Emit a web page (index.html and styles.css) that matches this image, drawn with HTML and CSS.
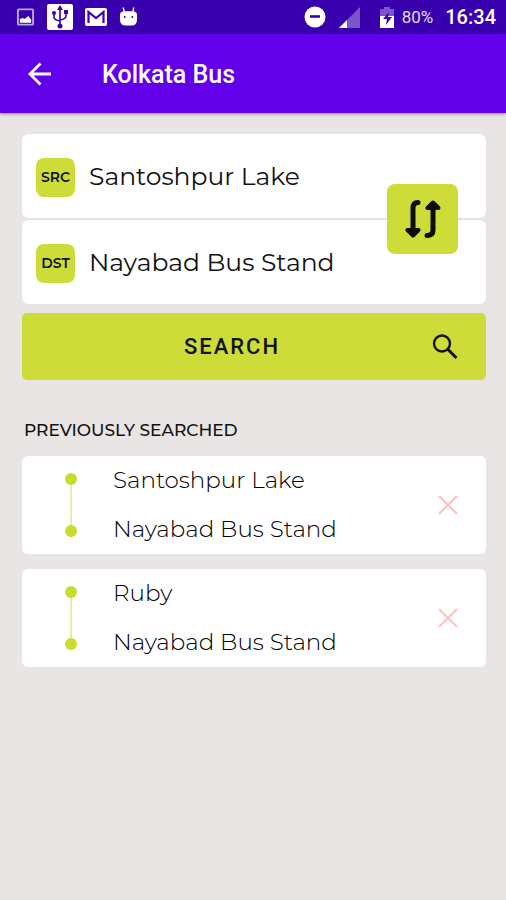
FILE: index.html
```html
<!DOCTYPE html>
<html lang="en">
<head>
<meta charset="utf-8">
<meta name="viewport" content="width=device-width, initial-scale=1">
<title>Kolkata Bus</title>
<link rel="stylesheet" href="styles.css">
</head>
<body>
<div class="status-bar">
  <div class="status-group notifications">
    <svg class="icon-small" viewBox="0 0 20 20" aria-hidden="true"><rect x="2" y="2" width="16" height="16" rx="1" fill="none" stroke="#b9a8ee" stroke-width="2"/><path d="M4 16v-4l3-1 2 1 4-3 3 4v3z" fill="#fff"/></svg>
    <svg class="icon-usb" viewBox="0 0 26 26" aria-hidden="true"><rect width="26" height="26" rx="2" fill="#fff"/><g fill="none" stroke="#3a00ad" stroke-width="1.600"><path d="M13 4v18M7 9v4q0 3 6 4M19 8v4q0 3-6 4"/></g><path d="M13 1l3 5h-6zM17 6h4v4h-4z" fill="#3a00ad"/><circle cx="7" cy="9" r="2" fill="#3a00ad"/><circle cx="13" cy="22" r="2.500" fill="#3a00ad"/></svg>
    <svg class="icon-mail" viewBox="0 0 22 18" aria-hidden="true"><rect width="22" height="18" rx="2" fill="#fff"/><path d="M3.500 15V4L11 10l7.500-6v11" fill="none" stroke="#3a00ad" stroke-width="2.200"/></svg>
    <svg class="icon-small" viewBox="0 0 20 20" aria-hidden="true"><path d="M4.500 0l1 5M15.500 0l-1 5" stroke="#fff" stroke-width="1.4"/><path d="M1 8q0-4 5-4h8q5 0 5 4v4q0 7-6 7H7q-6 0-6-7z" fill="#fff"/><circle cx="6" cy="10" r="1" fill="#3a00ad"/><circle cx="14" cy="10" r="1" fill="#3a00ad"/></svg>
  </div>
  <div class="status-group">
    <svg class="icon-dnd" viewBox="0 0 22 22" aria-hidden="true"><circle cx="11" cy="11" r="10.5" fill="#fff"/><path d="M6 10.5h10" stroke="#3a00ad" stroke-width="2.6"/></svg>
    <svg class="icon-signal" viewBox="0 0 22 22" aria-hidden="true"><path d="M22 1v21H1z" fill="#7a55cc"/><path d="M9 14v8H1z" fill="#fff"/></svg>
    <svg class="icon-battery" viewBox="0 0 14 22" aria-hidden="true"><path d="M4 1h6v2h4v19H0V3h4z" fill="#7a55cc"/><path d="M0 10h14v12H0z" fill="#fff"/><path d="M9 6l-6 7h4l-1 6 6-8H8z" fill="#3a00ad"/></svg>
    <span class="battery-level">80%</span>
    <span class="clock">16:34</span>
  </div>
</div>
<header class="app-bar">
  <button class="back" type="button" aria-label="Back"><svg viewBox="0 0 24 24"><path d="M23 12H2M12.500 1.500L2 12l10.500 10.500" fill="none" stroke="#fff" stroke-width="2.800"/></svg></button>
  <h1 class="app-title">Kolkata Bus</h1>
</header>
<main class="content">
  <form class="search-form">
    <div class="fields">
      <div class="field">
        <label class="tag" for="source">SRC</label>
        <input class="place" id="source" type="text" value="Santoshpur Lake">
      </div>
      <div class="field">
        <label class="tag" for="destination">DST</label>
        <input class="place" id="destination" type="text" value="Nayabad Bus Stand">
      </div>
      <button class="swap" type="button" aria-label="Swap source and destination">
        <svg viewBox="0 0 36 40"><g fill="none" stroke="#0b0c02" stroke-width="5" stroke-linecap="round" stroke-linejoin="round"><path d="M13 3.500Q8 3.500 8 9v23M22 36.500Q28 36.500 28 31V8"/></g><g fill="#0b0c02" stroke="#0b0c02" stroke-width="4" stroke-linejoin="round"><path d="M2.500 31h11L8 36.500zM22.500 9h11L28 3.500z"/></g></svg>
      </button>
    </div>
    <button class="search" type="submit">
      <span class="search-text">SEARCH</span>
      <svg viewBox="0 0 26 26" aria-hidden="true"><circle cx="10" cy="9.500" r="8" fill="none" stroke="#111400" stroke-width="2.400"/><path d="M16 15.500l8.500 8.500" stroke="#111400" stroke-width="3"/></svg>
    </button>
  </form>
  <h2 class="section-title">PREVIOUSLY SEARCHED</h2>
  <ul class="history">
    <li class="trip">
      <span class="route" aria-hidden="true"></span>
      <div class="stops"><span>Santoshpur Lake</span><span>Nayabad Bus Stand</span></div>
      <button class="remove" type="button" aria-label="Remove"><svg viewBox="0 0 20 20"><path d="M1 1l18 18M19 1L1 19" stroke="#ffc0c0" stroke-width="2"/></svg></button>
    </li>
    <li class="trip">
      <span class="route" aria-hidden="true"></span>
      <div class="stops"><span>Ruby</span><span>Nayabad Bus Stand</span></div>
      <button class="remove" type="button" aria-label="Remove"><svg viewBox="0 0 20 20"><path d="M1 1l18 18M19 1L1 19" stroke="#ffc0c0" stroke-width="2"/></svg></button>
    </li>
  </ul>
</main>
</body>
</html>
```
FILE: styles.css
```css
* { box-sizing: border-box; }
body {
  margin: 0;
  min-height: 100vh;
  background: #e9e5e4;
  color: #111;
  font-family: Montserrat, Inter, sans-serif;
}
button {
  border: 0;
  padding: 0;
  background: none;
  color: inherit;
  cursor: pointer;
}
svg { display: block; flex: none; }

.status-bar {
  display: flex;
  justify-content: space-between;
  align-items: center;
  height: 34px;
  padding: 0 10px 0 16px;
  background: #3900ae;
  color: #fff;
  font-family: Roboto, sans-serif;
}
.status-group { display: flex; align-items: center; }
.notifications { gap: 12px; }
.icon-small { width: 19px; height: 20px; }
.icon-usb { width: 26px; height: 26px; }
.icon-mail { width: 22px; height: 18px; }
.icon-dnd { width: 22px; height: 22px; }
.icon-signal { width: 22px; height: 22px; margin-left: 12px; }
.icon-battery { width: 14px; height: 22px; margin-left: 20px; }
.battery-level { margin-left: 8px; font-size: 17px; color: #e4dcfa; }
.clock { margin-left: 12px; font-size: 20px; font-weight: 500; }

.app-bar {
  display: flex;
  align-items: center;
  gap: 50px;
  height: 79px;
  padding: 0 28px;
  background: #6200ea;
  color: #fff;
  box-shadow: 0 1px 3px rgba(0, 0, 0, .4);
}
.back svg { width: 24px; height: 24px; }
.app-title {
  margin: 0;
  padding-top: 2px;
  font: 500 25px/32px Roboto, sans-serif;
}

.content { padding: 21px 20px 24px 22px; }
.fields {
  position: relative;
  display: grid;
  grid-template-columns: minmax(0, 1fr);
  gap: 2px;
}
.field {
  display: flex;
  align-items: center;
  gap: 14px;
  height: 84px;
  padding: 2px 100px 0 14px;
  border-radius: 6px;
  background: #fff;
  box-shadow: 0 0 2px rgba(0, 0, 0, .06);
}
.tag {
  flex: none;
  width: 39px;
  border-radius: 8px;
  background: #cddc39;
  font-size: 14px;
  font-weight: 600;
  line-height: 39px;
  text-align: center;
}
.place {
  flex: 1;
  min-width: 0;
  padding: 0 0 2px;
  border: 0;
  outline: 0;
  background: none;
  color: #111;
  font: 400 25px/36px Montserrat, Inter, sans-serif;
}
.swap {
  position: absolute;
  top: 50%;
  right: 28px;
  display: grid;
  place-items: center;
  width: 71px;
  height: 70px;
  border-radius: 8px;
  background: #cddc39;
  transform: translateY(-50%);
}
.swap svg { width: 36px; height: 40px; }
.search {
  display: flex;
  align-items: center;
  width: 100%;
  height: 67px;
  margin-top: 9px;
  padding: 0 28px;
  border-radius: 5px;
  background: #cddc39;
  color: #111400;
  font: 500 22px/28px Roboto, sans-serif;
  letter-spacing: 2px;
}
.search-text { flex: 1; padding-right: 18px; }
.search svg { width: 26px; height: 26px; }

.section-title {
  margin: 38px 2px 14px;
  font-size: 17px;
  font-weight: 500;
  line-height: 24px;
}
.history {
  display: grid;
  gap: 15px;
  margin: 0;
  padding: 0;
  list-style: none;
}
.trip {
  display: flex;
  align-items: center;
  padding: 0 28px 0 43px;
  border-radius: 6px;
  background: #fff;
}
.route {
  display: flex;
  flex-direction: column;
  justify-content: space-between;
  width: 12px;
  height: 64px;
  background: linear-gradient(#e5edaf, #e5edaf) center / 2px 100% no-repeat;
}
.route::before,
.route::after {
  content: "";
  width: 12px;
  height: 12px;
  border-radius: 50%;
  background: #c8dc2e;
}
.stops {
  flex: 1;
  display: grid;
  margin-left: 36px;
  color: #000;
  font-size: 23px;
  font-weight: 300;
  line-height: 49px;
}
.remove svg { width: 20px; height: 20px; }
```
